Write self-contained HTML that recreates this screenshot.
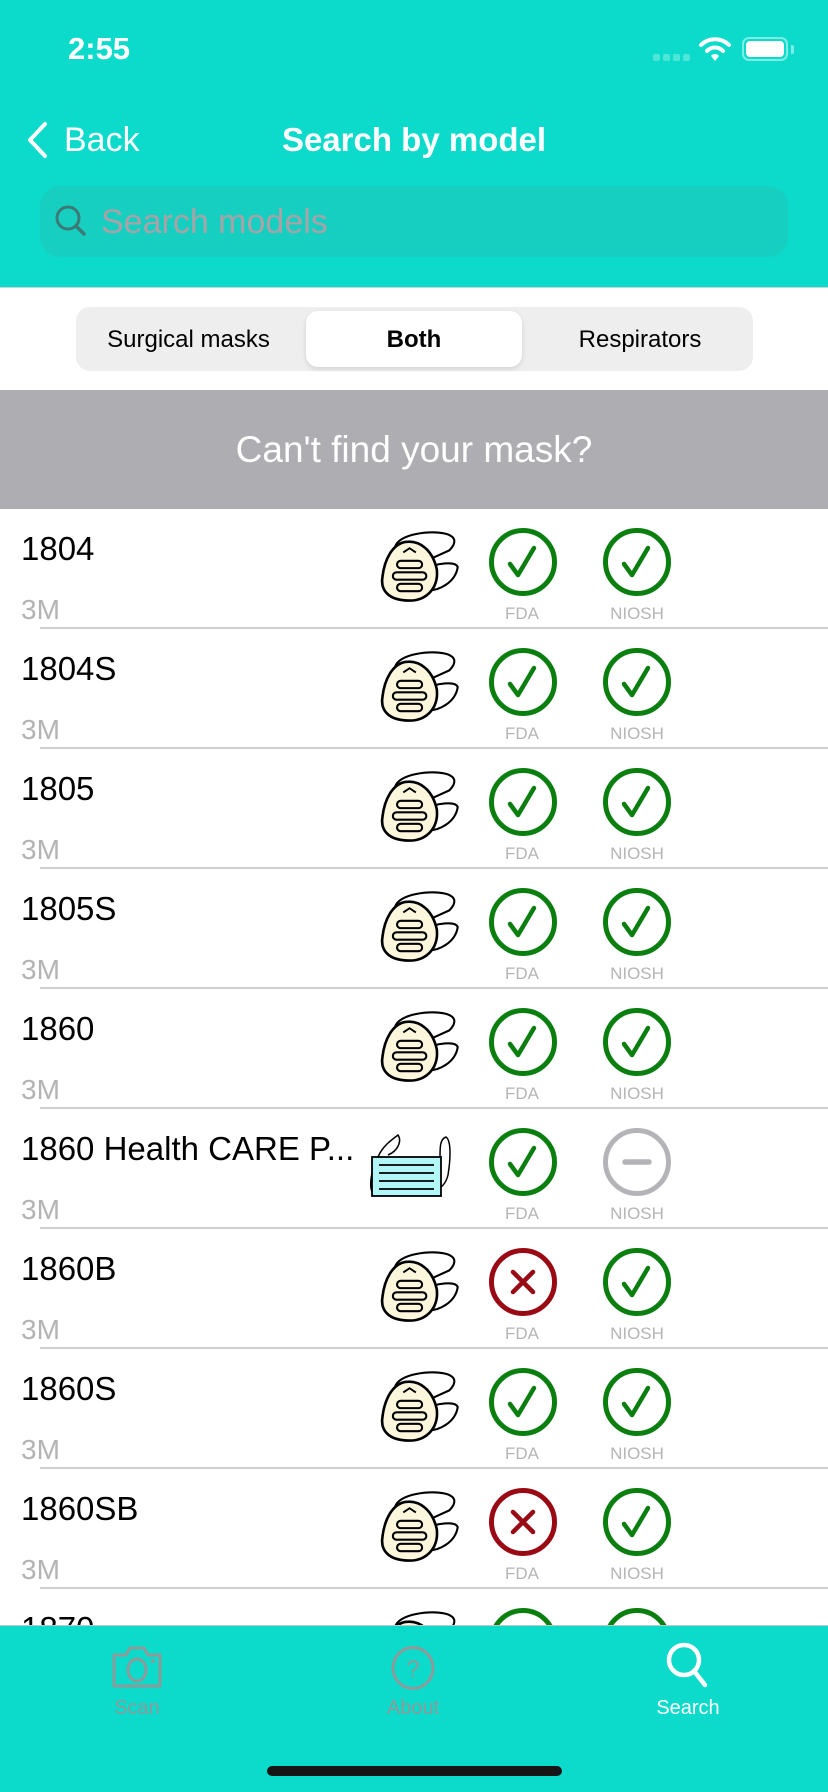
<!DOCTYPE html>
<html><head><meta charset="utf-8"><style>
*{margin:0;padding:0;box-sizing:border-box}
body{width:828px;height:1792px;overflow:hidden;background:#fff;font-family:"Liberation Sans",sans-serif;position:relative}
.abs{position:absolute}
.hdr{left:0;top:0;width:828px;height:288px;background:#0cdacb;border-bottom:1px solid #c9d6d5}
.row{position:absolute;left:0;width:828px;height:120px}
.row .t{position:absolute;left:21px;top:21px;font-size:33px;color:#000;white-space:nowrap}
.row .s{position:absolute;left:21px;top:85px;font-size:28px;color:#b3b3b3}
.row .sep{position:absolute;left:40px;right:0;bottom:0;height:2px;background:#d0d0d0}
.row svg.ic{position:absolute;left:374px;top:18px}
.row svg.c{position:absolute;top:17px}
.row .l{position:absolute;top:95px;font-size:17px;color:#b5b5b5;width:100px;text-align:center}
</style></head><body>
<svg width="0" height="0" style="position:absolute">
<defs>
<g id="resp">
<path d="M20 22 C18 8 50 2 68 6 C80 9 78 16 72 22 L50 32" fill="none" stroke="#000" stroke-width="2"/>
<path d="M48 40 C60 34 78 32 80 38 C78 52 62 62 48 60" fill="#fff" stroke="#000" stroke-width="2"/>
<path d="M30 14 C44 12 56 22 60 40 C62 58 50 70 34 70 C16 70 6 62 8 48 C10 30 18 16 30 14Z" fill="#fcf7dc" stroke="#000" stroke-width="2.5"/>
<path d="M28 24 L34 20 L40 24" fill="none" stroke="#000" stroke-width="1.8"/>
<rect x="22" y="32" width="24" height="7" rx="3.5" fill="none" stroke="#000" stroke-width="2"/>
<rect x="18" y="43" width="32" height="7" rx="3.5" fill="none" stroke="#000" stroke-width="2"/>
<rect x="22" y="54" width="24" height="7" rx="3.5" fill="none" stroke="#000" stroke-width="2"/>
</g>
<g id="ok"><circle cx="36" cy="36" r="31.5" fill="none" stroke="#0a7f0f" stroke-width="5"/><path d="M23 38 L31 49 L47 22" fill="none" stroke="#0a7f0f" stroke-width="4.5" stroke-linecap="round" stroke-linejoin="round"/></g>
<g id="no"><circle cx="36" cy="36" r="31.5" fill="none" stroke="#9a0a14" stroke-width="5"/><path d="M26 26 L46 46 M46 26 L26 46" fill="none" stroke="#9a0a14" stroke-width="4.5" stroke-linecap="round"/></g>
<g id="na"><circle cx="36" cy="36" r="31.5" fill="none" stroke="#b4b4b8" stroke-width="5"/><path d="M24 36 L48 36" stroke="#b4b4b8" stroke-width="5.5" stroke-linecap="round"/></g>
</defs></svg>

<div class="abs hdr"></div>
<div class="abs" style="left:68px;top:31px;font-size:31px;font-weight:bold;color:#fff">2:55</div>
<div class="abs" style="left:653px;top:54px;width:37px;height:7px;display:flex;gap:3px"><i style="flex:1;background:#4fe6da;border-radius:2px"></i><i style="flex:1;background:#4fe6da;border-radius:2px"></i><i style="flex:1;background:#4fe6da;border-radius:2px"></i><i style="flex:1;background:#4fe6da;border-radius:2px"></i></div>
<svg class="abs" style="left:699px;top:36px" width="32" height="26" viewBox="0 0 32 26"><path d="M2 9 A20 20 0 0 1 30 9" fill="none" stroke="#fff" stroke-width="4" stroke-linecap="round"/><path d="M8 15 A11 11 0 0 1 24 15" fill="none" stroke="#fff" stroke-width="4" stroke-linecap="round"/><path d="M12 20 L16 25 L20 20 A5 5 0 0 0 12 20Z" fill="#fff"/></svg>
<div class="abs" style="left:742px;top:37px;width:46px;height:24px;border:2px solid #7beee5;border-radius:7px"><div style="position:absolute;left:2px;top:2px;right:2px;bottom:2px;background:#fff;border-radius:4px"></div></div>
<div class="abs" style="left:791px;top:45px;width:3px;height:9px;background:#7beee5;border-radius:0 2px 2px 0"></div>

<svg class="abs" style="left:25px;top:121px" width="24" height="38" viewBox="0 0 24 38"><path d="M20 3 L5 19 L20 35" fill="none" stroke="#fff" stroke-width="4" stroke-linecap="round" stroke-linejoin="round"/></svg>
<div class="abs" style="left:64px;top:121px;font-size:34px;color:#fff">Back</div>
<div class="abs" style="left:0;width:828px;top:121px;text-align:center;font-size:33px;font-weight:bold;color:#fff">Search by model</div>

<div class="abs" style="left:40px;top:186px;width:748px;height:71px;background:#17cfc1;border-radius:20px"></div>
<svg class="abs" style="left:54px;top:204px" width="34" height="34" viewBox="0 0 34 34"><circle cx="14" cy="14" r="11" fill="none" stroke="#3c7a76" stroke-width="3"/><path d="M22 22 L30 30" stroke="#3c7a76" stroke-width="3.5" stroke-linecap="round"/></svg>
<div class="abs" style="left:101px;top:203px;font-size:34px;color:#a9a2a6">Search models</div>

<div class="abs" style="left:76px;top:307px;width:677px;height:64px;background:#eeeeef;border-radius:14px"></div>
<div class="abs" style="left:306px;top:311px;width:216px;height:56px;background:#fff;border-radius:12px;box-shadow:0 2px 5px rgba(0,0,0,.12)"></div>
<div class="abs" style="left:76px;width:225px;top:326px;text-align:center;font-size:24px;color:#000">Surgical masks</div>
<div class="abs" style="left:306px;width:216px;top:326px;text-align:center;font-size:24px;font-weight:bold;color:#000">Both</div>
<div class="abs" style="left:527px;width:226px;top:326px;text-align:center;font-size:24px;color:#000">Respirators</div>

<div class="abs" style="left:0;top:390px;width:828px;height:119px;background:#aeaeb2;color:#fff;font-size:37px;text-align:center;line-height:119px">Can't find your mask?</div>

<div class="row" style="top:509px"><div class="t">1804</div><div class="s">3M</div><svg class="ic" width="90" height="76" viewBox="0 0 86 72"><use href="#resp"/></svg><svg class="c" style="left:487px" width="72" height="72"><use href="#ok"/></svg><div class="l" style="left:472px">FDA</div><svg class="c" style="left:601px" width="72" height="72"><use href="#ok"/></svg><div class="l" style="left:587px">NIOSH</div><div class="sep"></div></div>
<div class="row" style="top:629px"><div class="t">1804S</div><div class="s">3M</div><svg class="ic" width="90" height="76" viewBox="0 0 86 72"><use href="#resp"/></svg><svg class="c" style="left:487px" width="72" height="72"><use href="#ok"/></svg><div class="l" style="left:472px">FDA</div><svg class="c" style="left:601px" width="72" height="72"><use href="#ok"/></svg><div class="l" style="left:587px">NIOSH</div><div class="sep"></div></div>
<div class="row" style="top:749px"><div class="t">1805</div><div class="s">3M</div><svg class="ic" width="90" height="76" viewBox="0 0 86 72"><use href="#resp"/></svg><svg class="c" style="left:487px" width="72" height="72"><use href="#ok"/></svg><div class="l" style="left:472px">FDA</div><svg class="c" style="left:601px" width="72" height="72"><use href="#ok"/></svg><div class="l" style="left:587px">NIOSH</div><div class="sep"></div></div>
<div class="row" style="top:869px"><div class="t">1805S</div><div class="s">3M</div><svg class="ic" width="90" height="76" viewBox="0 0 86 72"><use href="#resp"/></svg><svg class="c" style="left:487px" width="72" height="72"><use href="#ok"/></svg><div class="l" style="left:472px">FDA</div><svg class="c" style="left:601px" width="72" height="72"><use href="#ok"/></svg><div class="l" style="left:587px">NIOSH</div><div class="sep"></div></div>
<div class="row" style="top:989px"><div class="t">1860</div><div class="s">3M</div><svg class="ic" width="90" height="76" viewBox="0 0 86 72"><use href="#resp"/></svg><svg class="c" style="left:487px" width="72" height="72"><use href="#ok"/></svg><div class="l" style="left:472px">FDA</div><svg class="c" style="left:601px" width="72" height="72"><use href="#ok"/></svg><div class="l" style="left:587px">NIOSH</div><div class="sep"></div></div>
<div class="row" style="top:1109px"><div class="t">1860 Health CARE P...</div><div class="s">3M</div>
<svg class="ic" style="left:368px;top:24px" width="96" height="68" viewBox="0 0 96 68"><path d="M10 24 C14 14 22 8 30 2 C34 8 30 18 20 22" fill="none" stroke="#000" stroke-width="1.5"/><path d="M72 24 C72 14 72 6 78 4 C84 8 82 30 80 42 C78 50 74 54 70 56" fill="none" stroke="#000" stroke-width="1.5"/><path d="M4 40 C2 50 2 58 6 62" fill="none" stroke="#000" stroke-width="1.5"/><rect x="4" y="24" width="69" height="39" fill="#b3f6f8" stroke="#000" stroke-width="1.8"/><path d="M11 32 H66 M11 40 H66 M11 48 H66 M11 56 H66" stroke="#000" stroke-width="1.8"/></svg>
<svg class="c" style="left:487px" width="72" height="72"><use href="#ok"/></svg><div class="l" style="left:472px">FDA</div><svg class="c" style="left:601px" width="72" height="72"><use href="#na"/></svg><div class="l" style="left:587px">NIOSH</div><div class="sep"></div></div>
<div class="row" style="top:1229px"><div class="t">1860B</div><div class="s">3M</div><svg class="ic" width="90" height="76" viewBox="0 0 86 72"><use href="#resp"/></svg><svg class="c" style="left:487px" width="72" height="72"><use href="#no"/></svg><div class="l" style="left:472px">FDA</div><svg class="c" style="left:601px" width="72" height="72"><use href="#ok"/></svg><div class="l" style="left:587px">NIOSH</div><div class="sep"></div></div>
<div class="row" style="top:1349px"><div class="t">1860S</div><div class="s">3M</div><svg class="ic" width="90" height="76" viewBox="0 0 86 72"><use href="#resp"/></svg><svg class="c" style="left:487px" width="72" height="72"><use href="#ok"/></svg><div class="l" style="left:472px">FDA</div><svg class="c" style="left:601px" width="72" height="72"><use href="#ok"/></svg><div class="l" style="left:587px">NIOSH</div><div class="sep"></div></div>
<div class="row" style="top:1469px"><div class="t">1860SB</div><div class="s">3M</div><svg class="ic" width="90" height="76" viewBox="0 0 86 72"><use href="#resp"/></svg><svg class="c" style="left:487px" width="72" height="72"><use href="#no"/></svg><div class="l" style="left:472px">FDA</div><svg class="c" style="left:601px" width="72" height="72"><use href="#ok"/></svg><div class="l" style="left:587px">NIOSH</div><div class="sep"></div></div>
<div class="row" style="top:1589px"><div class="t">1870</div><svg class="ic" width="90" height="76" viewBox="0 0 86 72"><use href="#resp"/></svg><svg class="c" style="left:487px" width="72" height="72"><use href="#ok"/></svg><svg class="c" style="left:601px" width="72" height="72"><use href="#ok"/></svg></div>

<div class="abs" style="left:0;top:1625px;width:828px;height:167px;background:#0cdacb;border-top:1px solid #b8c8c6"></div>
<svg class="abs" style="left:110px;top:1645px" width="54" height="44" viewBox="0 0 54 44"><path d="M4 10 H16 L20 3 H34 L38 10 H50 V41 H4 Z" fill="none" stroke="#8e9a99" stroke-width="3" stroke-linejoin="round"/><ellipse cx="27" cy="25" rx="9" ry="11" fill="none" stroke="#8e9a99" stroke-width="3"/><circle cx="43" cy="16" r="2" fill="#8e9a99"/></svg>
<div class="abs" style="left:87px;width:100px;top:1697px;text-align:center;font-size:20px;color:#8e9a99">Scan</div>
<svg class="abs" style="left:390px;top:1645px" width="46" height="46" viewBox="0 0 46 46"><ellipse cx="23" cy="23" rx="20" ry="20.5" fill="none" stroke="#8e9a99" stroke-width="3"/><text x="23" y="32" text-anchor="middle" font-family="Liberation Sans" font-size="24" fill="#8e9a99">?</text></svg>
<div class="abs" style="left:363px;width:100px;top:1697px;text-align:center;font-size:20px;color:#8e9a99">About</div>
<svg class="abs" style="left:664px;top:1640px" width="50" height="50" viewBox="0 0 50 50"><circle cx="20" cy="20" r="15" fill="none" stroke="#fff" stroke-width="4.5"/><path d="M30 31 L41 45" stroke="#fff" stroke-width="4.5" stroke-linecap="round"/></svg>
<div class="abs" style="left:638px;width:100px;top:1697px;text-align:center;font-size:20px;color:#fff">Search</div>
<div class="abs" style="left:267px;top:1766px;width:295px;height:10px;background:#151515;border-radius:5px"></div>
</body></html>
